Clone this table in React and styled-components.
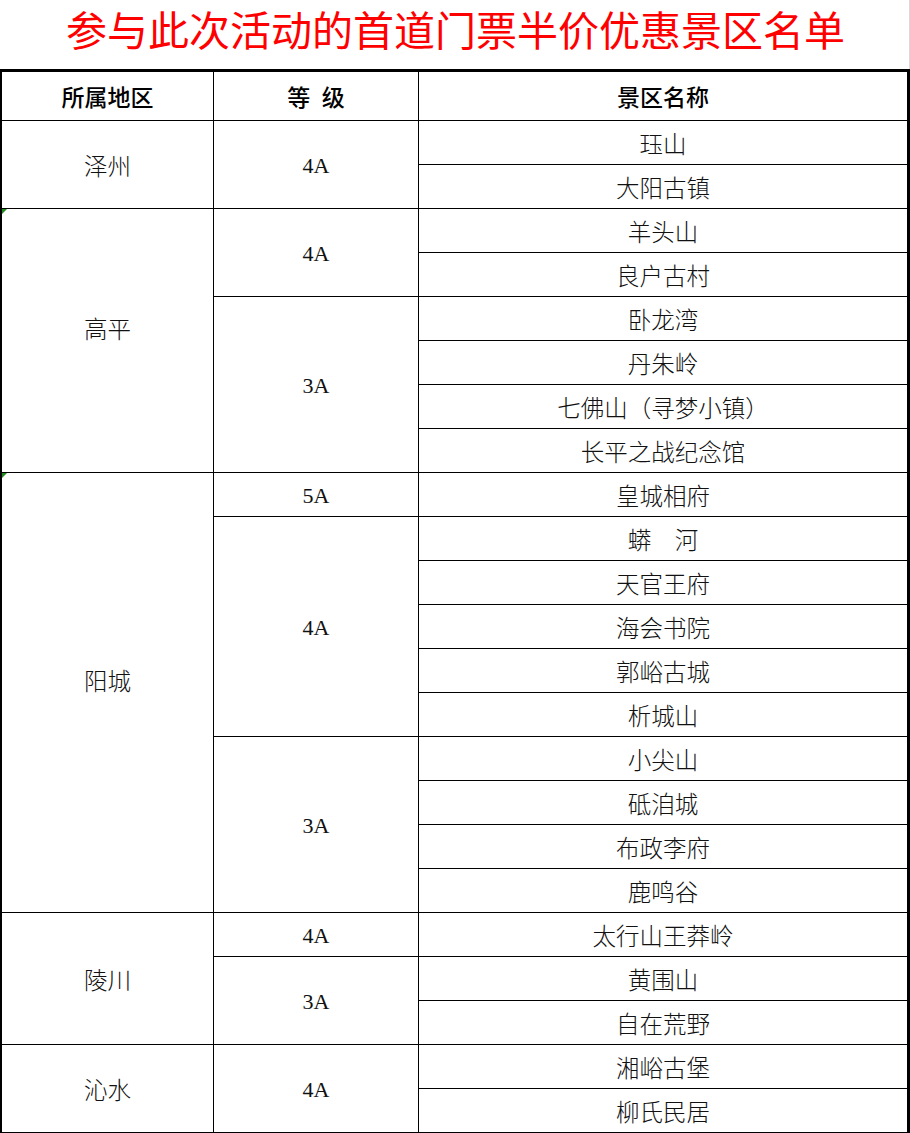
import React from 'react';
import styled, { createGlobalStyle } from 'styled-components';

const GlobalStyle = createGlobalStyle`
    html, body {
        margin: 0;
        padding: 0;
        background: #ffffff;
    }
    body {
        font-family: "Liberation Serif", "Noto Sans CJK SC", serif;
        color: #111;
    }
`;

// 地区 -> 等级 -> 景区
const data = [
    { region: '泽州', grades: [{ level: '4A', spots: ['珏山', '大阳古镇'] }] },
    {
        region: '高平', flag: true, grades: [
            { level: '4A', spots: ['羊头山', '良户古村'] },
            { level: '3A', spots: ['卧龙湾', '丹朱岭', '七佛山（寻梦小镇）', '长平之战纪念馆'] },
        ]
    },
    {
        region: '阳城', flag: true, grades: [
            { level: '5A', spots: ['皇城相府'] },
            { level: '4A', spots: ['蟒　河', '天官王府', '海会书院', '郭峪古城', '析城山'] },
            { level: '3A', spots: ['小尖山', '砥洎城', '布政李府', '鹿鸣谷'] },
        ]
    },
    {
        region: '陵川', grades: [
            { level: '4A', spots: ['太行山王莽岭'] },
            { level: '3A', spots: ['黄围山', '自在荒野'] },
        ]
    },
    { region: '沁水', grades: [{ level: '4A', spots: ['湘峪古堡', '柳氏民居'] }] },
];

function App() {
    const cells = [];
    let row = 2;

    data.forEach((r) => {
        const regionStart = row;
        let regionSpan = 0;
        r.grades.forEach((g) => {
            const gradeStart = row;
            g.spots.forEach((s) => {
                cells.push(<Cell key={'s' + row} $col={3} $row={row} $span={1}>{s}</Cell>);
                row++;
            });
            cells.push(<GradeCell key={'g' + gradeStart} $col={2} $row={gradeStart} $span={g.spots.length}>{g.level}</GradeCell>);
            regionSpan += g.spots.length;
        });
        cells.push(
            <Cell key={'r' + regionStart} $col={1} $row={regionStart} $span={regionSpan} $flag={r.flag}>
                {r.region}
            </Cell>
        );
    });

    return (
        <Page>
            <GlobalStyle />
            <Title>参与此次活动的首道门票半价优惠景区名单</Title>
            <Table>
                <HeadCell>所属地区</HeadCell>
                <HeadCell>等  级</HeadCell>
                <HeadCell>景区名称</HeadCell>
                {cells}
            </Table>
        </Page>
    );
}

export default App;

const Page = styled.div`
    width: 910px;
    display: flex;
    flex-direction: column;
`;

const Title = styled.h1`
    margin: 0;
    height: 69px;
    box-sizing: border-box;
    display: flex;
    align-items: center;
    justify-content: center;
    padding-bottom: 13px;
    padding-left: 2px;
    border-right: 1px solid #d9d9d9;
    font-family: "Noto Sans CJK SC", serif;
    font-size: 41px;
    font-weight: 400;
    letter-spacing: 0;
    color: #ff0000;
`;

const Table = styled.div`
    display: grid;
    grid-template-columns: 211px 204px 1fr;
    grid-template-rows: 48px;
    grid-auto-rows: 43px;
    gap: 1px;
    background: #000;
    border-top: 3px solid #000;
    border-right: 3px solid #000;
    border-bottom: 2px solid #000;
    border-left: 2px solid #000;
`;

const HeadCell = styled.div`
    background: #fff;
    display: flex;
    align-items: center;
    justify-content: center;
    white-space: pre;
    font-family: "Liberation Serif", "Noto Sans CJK SC", serif;
    font-size: 23px;
    font-weight: 500;
    color: #000;
`;

const Cell = styled.div`
    position: relative;
    grid-column: ${(p) => p.$col};
    grid-row: ${(p) => p.$row} / span ${(p) => p.$span};
    background: #fff;
    display: flex;
    align-items: center;
    justify-content: center;
    box-sizing: border-box;
    padding-bottom: ${(p) => (p.$flag ? '26px' : '0')};
    white-space: pre;
    font-family: "Liberation Serif", "Noto Sans CJK SC", serif;
    font-size: 23.5px;
    font-weight: 300;
    color: #111;

    &::before {
        content: '';
        display: ${(p) => (p.$flag ? 'block' : 'none')};
        position: absolute;
        left: 0;
        top: 0;
        border-top: 5px solid #1f8a1f;
        border-right: 5px solid transparent;
    }
`;

const GradeCell = styled(Cell)`
    font-size: 22px;
    font-weight: 400;
    padding-top: 2px;
`;
